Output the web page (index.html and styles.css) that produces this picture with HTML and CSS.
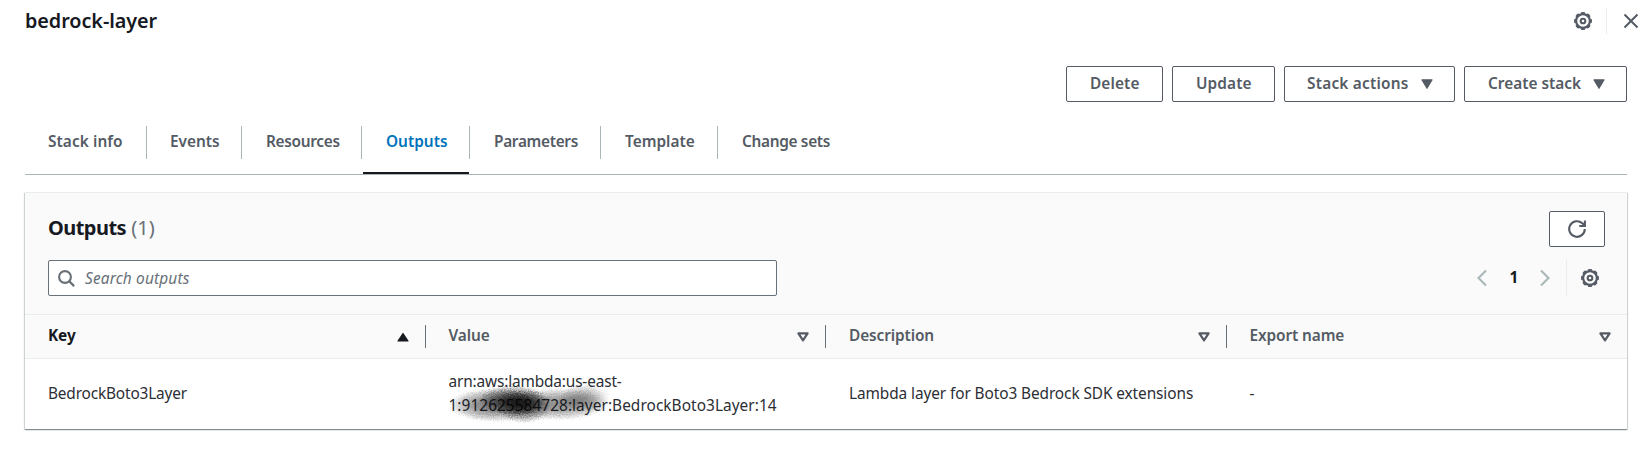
FILE: index.html
```
<!DOCTYPE html>
<html lang="en">
<head>
<meta charset="utf-8">
<title>bedrock-layer</title>
<link rel="stylesheet" href="styles.css">
</head>
<body>
<svg class="defs" width="0" height="0" aria-hidden="true">
  <defs>
    <symbol id="gear" viewBox="0 0 18 18">
      <circle cx="9" cy="9" r="6.900" fill="none" stroke="currentColor" stroke-width="2.200"/>
      <circle cx="9" cy="9" r="8.100" fill="none" stroke="currentColor" stroke-width="1.700" pathLength="80" stroke-dasharray="6 4" stroke-dashoffset="3"/>
      <circle cx="9" cy="9" r="2.300" fill="none" stroke="currentColor" stroke-width="2.100"/>
    </symbol>
    <symbol id="sort" viewBox="0 0 12 10">
      <path d="M1.400 1.400h9.200L6 8.300z" fill="none" stroke="currentColor" stroke-width="2.200" stroke-linejoin="round"/>
    </symbol>
  </defs>
</svg>
<header class="top">
  <h1 class="title">bedrock-layer</h1>
  <div class="top-tools">
    <svg class="gear"><use href="#gear"/></svg>
    <span class="top-divider"></span>
    <svg class="close" viewBox="0 0 16 16"><path d="M1.500 1.500l13 13M14.500 1.500l-13 13" fill="none" stroke="currentColor" stroke-width="2"/></svg>
  </div>
</header>
<div class="actions">
  <button class="btn delete"><span>Delete</span></button>
  <button class="btn update"><span>Update</span></button>
  <button class="btn stack"><span>Stack actions</span><svg class="caret" viewBox="0 0 12 10"><path d="M.8.800h10.400L6 9.500z" fill="currentColor" stroke="currentColor" stroke-linejoin="round"/></svg></button>
  <button class="btn create"><span>Create stack</span><svg class="caret" viewBox="0 0 12 10"><path d="M.8.800h10.400L6 9.500z" fill="currentColor" stroke="currentColor" stroke-linejoin="round"/></svg></button>
</div>
<nav class="tabs">
  <a class="tab t1">Stack info</a>
  <a class="tab t2">Events</a>
  <a class="tab t3">Resources</a>
  <a class="tab t4 active">Outputs</a>
  <a class="tab t5">Parameters</a>
  <a class="tab t6">Template</a>
  <a class="tab t7">Change sets</a>
</nav>
<section class="panel">
  <div class="panel-head">
    <div class="row">
      <h2 class="heading"><span class="name">Outputs</span> <span class="count">(1)</span></h2>
      <button class="refresh"><svg viewBox="0 0 18 18"><path d="M16.800 9A7.800 7.800 0 1 1 14.300 3.300L16.800 5.600M16.900.5v5.500h-5.600" fill="none" stroke="currentColor" stroke-width="2.100"/></svg></button>
    </div>
    <div class="row">
      <div class="search">
        <svg viewBox="0 0 17 17"><circle cx="7" cy="7" r="5.900" fill="none" stroke="currentColor" stroke-width="2.100"/><path d="M11.300 11.300l4.800 4.800" stroke="currentColor" stroke-width="2.300"/></svg>
        <span class="hint">Search outputs</span>
      </div>
      <div class="pager">
        <svg class="chev" viewBox="0 0 10 18"><path d="M9 1.500L1.500 9 9 16.500" fill="none" stroke="currentColor" stroke-width="2.100"/></svg>
        <span class="page">1</span>
        <svg class="chev" viewBox="0 0 10 18"><path d="M1 1.500L8.500 9 1 16.500" fill="none" stroke="currentColor" stroke-width="2.100"/></svg>
        <span class="pager-divider"></span>
        <svg class="gear"><use href="#gear"/></svg>
      </div>
    </div>
  </div>
  <div class="grid thead">
    <div class="th sorted"><span>Key</span><svg class="sort" viewBox="0 0 12 10"><path d="M1 9h10L6 1.500z" fill="currentColor" stroke="currentColor" stroke-width="1.200" stroke-linejoin="round"/></svg></div>
    <div class="th"><span>Value</span><svg class="sort"><use href="#sort"/></svg></div>
    <div class="th"><span>Description</span><svg class="sort"><use href="#sort"/></svg></div>
    <div class="th"><span>Export name</span><svg class="sort"><use href="#sort"/></svg></div>
  </div>
  <div class="grid tbody">
    <div class="td key">BedrockBoto3Layer</div>
    <div class="td arn">
      <div><span class="arn-start">arn:aws:lambda:us-east-</span><br><span class="arn-end">1:912625584728:layer:BedrockBoto3Layer:14</span></div>
      <svg class="smudge" viewBox="0 0 170 46">
        <defs>
          <radialGradient id="ink"><stop offset="0" stop-color="#000" stop-opacity=".9"/><stop offset=".4" stop-color="#000" stop-opacity=".7"/><stop offset=".75" stop-color="#000" stop-opacity=".32"/><stop offset="1" stop-color="#000" stop-opacity="0"/></radialGradient>
          <filter id="grain" x="-5%" y="-10%" width="110%" height="120%"><feTurbulence type="fractalNoise" baseFrequency=".9" numOctaves="2" seed="4"/><feDisplacementMap in="SourceGraphic" scale="7" xChannelSelector="R" yChannelSelector="G"/></filter>
        </defs>
        <g filter="url(#grain)" fill="url(#ink)">
          <ellipse cx="48" cy="25" rx="45" ry="17" opacity=".6"/>
          <ellipse cx="67" cy="20" rx="34" ry="15" opacity=".75"/>
          <ellipse cx="78" cy="26" rx="28" ry="17" opacity=".75"/>
          <ellipse cx="112" cy="24" rx="50" ry="16" opacity=".5"/>
          <ellipse cx="138" cy="18" rx="25" ry="14" opacity=".35"/>
        </g>
      </svg>
    </div>
    <div class="td desc">Lambda layer for Boto3 Bedrock SDK extensions</div>
    <div class="td">-</div>
  </div>
</section>
</body>
</html>
```
FILE: styles.css
```
* { box-sizing: border-box; }
body { margin: 0; width: 1646px; height: 452px; overflow: hidden; background: #fff; color: #16191f; font: 15.4px/24px "Noto Sans", "Open Sans", sans-serif; }
.defs { position: absolute; }
h1, h2 { margin: 0; }
svg { display: block; flex: none; }
.top { display: flex; justify-content: space-between; height: 66px; padding: 8px 7px 0 25px; }
.title { font-size: 19.8px; line-height: 25px; font-weight: 600; letter-spacing: -.05px; }
.top-tools { display: flex; height: 26px; align-items: center; color: #545b64; }
.gear { width: 18px; height: 18px; }
.top-divider { width: 1px; height: 26px; margin: 0 16px 0 14px; background: #eaeded; }
.close { width: 16px; height: 16px; }
.actions { display: flex; justify-content: flex-end; gap: 9px; padding-right: 19px; height: 60px; }
.btn { display: flex; align-items: center; height: 36px; padding: 0 0 0 23px; border: 1px solid #545b64; border-radius: 2px; background: #fff; color: #545b64; font: 600 15.4px/24px "Noto Sans", sans-serif; white-space: nowrap; }
.delete { width: 97px; letter-spacing: .1px; }
.update { width: 103px; letter-spacing: .1px; }
.stack { width: 171px; padding-left: 22px; letter-spacing: .22px; }
.create { width: 163px; }
.caret { width: 12px; height: 10px; margin: 0 0 0 12px; }
.tabs { display: flex; margin: 0 19px 0 25px; height: 49px; border-bottom: 1px solid #aab7b8; color: #545b64; font-weight: 600; }
.tab { position: relative; height: 33px; padding: 4px 0 0 24px; border-right: 1px solid #aab7b8; white-space: nowrap; }
.t1 { width: 122px; padding-left: 23px; letter-spacing: .08px; }
.t2 { width: 95px; padding-left: 23px; }
.t3 { width: 120px; letter-spacing: -.3px; }
.t4 { width: 108px; }
.t5 { width: 131px; letter-spacing: -.32px; }
.t6 { width: 117px; }
.t7 { border-right: 0; letter-spacing: -.32px; }
.active { color: #0073bb; }
.active::after { content: ""; position: absolute; left: 1px; right: 0; top: 46px; height: 2px; background: #16191f; }
.panel { margin: 17px 19px 0 25px; height: 237px; border-top: 1px solid #eaeded; box-shadow: 0 1px 1px 0 rgba(0,28,36,.3), 1px 1px 1px 0 rgba(0,28,36,.15), -1px 1px 1px 0 rgba(0,28,36,.15); }
.panel-head { height: 122px; padding: 18px 22px 0 23px; background: #fafafa; border-bottom: 1px solid #eaeded; }
.row { display: flex; justify-content: space-between; height: 49px; }
.heading { padding-top: 4px; font-size: 20px; line-height: 26px; white-space: nowrap; }
.name { font-weight: 700; letter-spacing: -.55px; }
.count { font-weight: 400; color: #687078; }
.refresh { display: grid; place-items: center; width: 56px; height: 36px; padding: 0; border: 1px solid #545b64; border-radius: 2px; background: #fff; color: #545b64; }
.refresh svg { width: 18px; height: 18px; }
.search { display: flex; align-items: center; width: 729px; height: 36px; padding-left: 9px; border: 1px solid #687078; border-radius: 2px; background: #fff; color: #687078; font-style: italic; }
.search svg { width: 17px; height: 17px; margin-right: 10px; }
.hint { padding-top: 1px; letter-spacing: .17px; }
.pager { display: flex; align-items: center; height: 36px; padding-right: 6px; color: #545b64; }
.chev { width: 10px; height: 18px; color: #aab7b8; }
.page { width: 53px; padding-left: 1px; text-align: center; color: #16191f; font-weight: 700; }
.pager-divider { width: 1px; height: 36px; margin: 0 14px 0 16px; background: #eaeded; }
.grid { display: grid; grid-template-columns: repeat(4, 400.5px); }
.thead { height: 44px; background: #fafafa; border-bottom: 1px solid #eaeded; color: #545b64; font-weight: 600; }
.th { display: flex; justify-content: space-between; height: 23px; margin-top: 10px; padding: 0 16px 0 23px; border-right: 1px solid #687078; letter-spacing: -.1px; }
.th span { margin-top: -1px; }
.th:last-child { border-right: 0; }
.sorted { color: #16191f; font-weight: 700; }
.sort { width: 12px; height: 10px; margin-top: 7px; }
.tbody { height: 70px; background: #fff; }
.td { display: flex; align-items: center; padding: 0 0 1px 23px; white-space: nowrap; color: #2b2e34; }
.key { letter-spacing: -.16px; }
.desc { letter-spacing: -.09px; }
.arn { position: relative; }
.arn-start { letter-spacing: -.15px; }
.arn-end { letter-spacing: .06px; }
.smudge { position: absolute; left: 20px; top: 21px; width: 170px; height: 46px; }
```
